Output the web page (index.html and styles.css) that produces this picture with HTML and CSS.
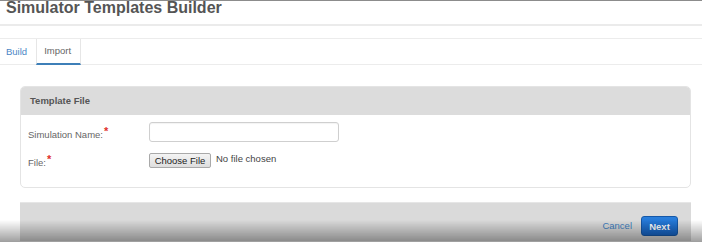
FILE: index.html
```html
<!DOCTYPE html>
<html>
<head>
<meta charset="utf-8">
<link rel="stylesheet" href="styles.css">
</head>
<body>
<div class="page">
  <header class="titlebar">
    <h1 class="title">Simulator Templates Builder</h1>
  </header>
  <nav class="tabs">
    <a class="tab tab-link">Build</a>
    <a class="tab tab-active">Import</a>
  </nav>
  <main class="content">
    <section class="panel">
      <div class="panel-head">Template File</div>
      <div class="panel-body">
        <div class="row">
          <label class="label">Simulation Name:<span class="req">*</span></label>
          <input class="text-input" type="text">
        </div>
        <div class="row row-file">
          <label class="label">File:<span class="req">*</span></label>
          <div class="file">
            <button class="file-btn" type="button">Choose File</button>
            <span class="file-name">No file chosen</span>
          </div>
        </div>
      </div>
    </section>
    <section class="footer">
      <a class="cancel">Cancel</a>
      <button class="next" type="button">Next</button>
    </section>
  </main>
  <div class="shade"></div>
</div>
</body>
</html>
```
FILE: styles.css
```css
html, body {
  margin: 0;
  padding: 0;
  background: #fff;
  overflow: hidden;
}
body {
  font-family: "Liberation Sans", Arial, sans-serif;
  color: #666;
  width: 702px;
  height: 242px;
}
.page {
  border-top: 1px solid #8c8c8c;
}
.titlebar {
  height: 23px;
  border-bottom: 2px solid #ebebeb;
  padding-left: 6px;
}
.title {
  margin: 0;
  font-size: 16px;
  line-height: 14px;
  font-weight: bold;
  color: #555;
}
.tabs {
  margin-top: 12px;
  display: flex;
  height: 25px;
  border-top: 1px solid #ececec;
  border-bottom: 1px solid #ececec;
  padding-left: 6px;
}
.tab {
  font-size: 9.5px;
  line-height: 25px;
}
.tab-link {
  color: #4a86c5;
  padding-right: 9px;
}
.tab-active {
  color: #666;
  padding: 0 9px 0 7px;
  border-left: 1px solid #e6e6e6;
  border-right: 1px solid #e6e6e6;
  border-bottom: 2px solid #3d7fb8;
  height: 24px;
  line-height: 24px;
}
.content {
  margin: 21px 11px 0 20px;
}
.panel {
  border: 1px solid #e4e4e4;
  border-radius: 5px;
  overflow: hidden;
}
.panel-head {
  background: #dcdcdc;
  height: 28px;
  line-height: 28px;
  padding-left: 9px;
  font-size: 9.5px;
  font-weight: bold;
  color: #555;
}
.panel-body {
  padding: 7px 0 19px 7px;
}
.row {
  display: flex;
  align-items: center;
}
.row-file {
  margin-top: 11px;
}
.label {
  width: 121px;
  font-size: 9.5px;
  color: #666;
}
.req {
  color: #e0302a;
  font-weight: bold;
  font-size: 11px;
  vertical-align: 3px;
  margin-left: 1px;
}
.text-input {
  width: 190px;
  height: 20px;
  box-sizing: border-box;
  border: 1px solid #cfcfcf;
  border-radius: 3px;
  margin: 0;
  padding: 0;
  box-shadow: inset 0 1px 1px rgba(0,0,0,0.05);
}
.file {
  display: flex;
  align-items: flex-start;
}
.file-btn {
  font-family: "Liberation Sans", Arial, sans-serif;
  font-size: 9.5px;
  color: #222;
  height: 15px;
  width: 62px;
  padding: 0;
  margin: 0;
  border: 1px solid #a9a9a9;
  border-radius: 2px;
  background: linear-gradient(#f4f4f4, #dedede);
  line-height: 13px;
}
.file-name {
  font-size: 9.5px;
  color: #444;
  margin-left: 5px;
  line-height: 11px;
}
.footer {
  margin-top: 14px;
  background: #dadada;
  border-top: 1px solid #e6e6e6;
  height: 25px;
  display: flex;
  justify-content: flex-end;
  align-items: flex-start;
  padding: 13px 13px 0 0;
  gap: 9px;
}
.cancel {
  font-size: 9.5px;
  color: #3f7fc0;
  line-height: 20px;
}
.next {
  font-family: "Liberation Sans", Arial, sans-serif;
  font-size: 9.5px;
  font-weight: bold;
  color: #fff;
  width: 37px;
  height: 20px;
  padding: 0;
  border: 1px solid #1558a8;
  border-radius: 3px;
  background: linear-gradient(#2a7fdc, #1764c4);
}
.shade {
  position: fixed;
  left: 0;
  right: 0;
  bottom: 0;
  height: 22px;
  background: linear-gradient(rgba(0,0,0,0), rgba(0,0,0,0.38));
  pointer-events: none;
}
```
